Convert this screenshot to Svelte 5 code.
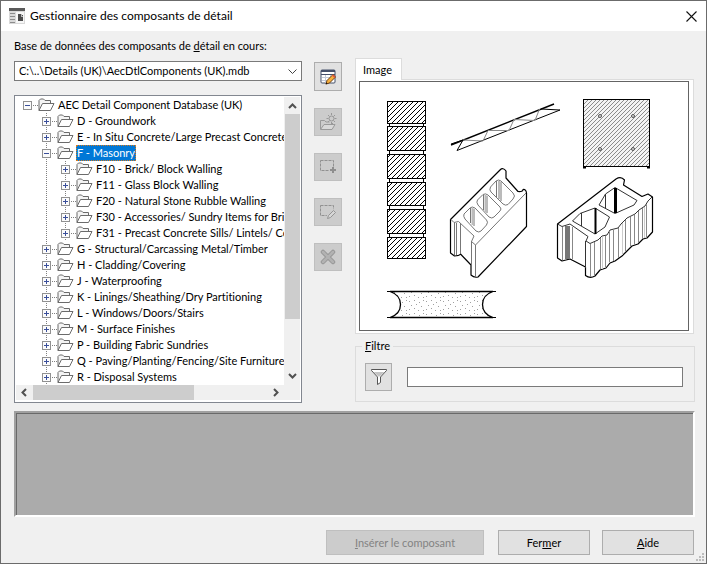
<script lang="ts">
  type Node = { label: string; open?: boolean; children?: Node[] }

  let tree = $state<Node[]>([
    {
      label: 'AEC Detail Component Database (UK)',
      open: true,
      children: [
        { label: 'D - Groundwork' },
        { label: 'E - In Situ Concrete/Large Precast Concrete' },
        {
          label: 'F - Masonry',
          open: true,
          children: [
            { label: 'F10 - Brick/ Block Walling' },
            { label: 'F11 - Glass Block Walling' },
            { label: 'F20 - Natural Stone Rubble Walling' },
            { label: 'F30 - Accessories/ Sundry Items for Bric' },
            { label: 'F31 - Precast Concrete Sills/ Lintels/ Co' },
          ],
        },
        { label: 'G - Structural/Carcassing Metal/Timber' },
        { label: 'H - Cladding/Covering' },
        { label: 'J - Waterproofing' },
        { label: 'K - Linings/Sheathing/Dry Partitioning' },
        { label: 'L - Windows/Doors/Stairs' },
        { label: 'M - Surface Finishes' },
        { label: 'P - Building Fabric Sundries' },
        { label: 'Q - Paving/Planting/Fencing/Site Furniture' },
        { label: 'R - Disposal Systems' },
      ],
    },
  ])

  let selected = $state('F - Masonry')
  let filter = $state('')

  // [top, height] of each brick in the wall section
  const bricks = [
    [101, 22],
    [126, 24],
    [154, 24],
    [182, 23],
    [209, 24],
    [237, 21],
  ]
</script>

{#snippet branch(nodes: Node[], depth: number)}
  <ul class:nested={depth > 0}>
    {#each nodes as node (node.label)}
      <li class:joined={depth > 0}>
        <div class="row">
          <button
            class="toggle"
            aria-label={node.open ? 'Réduire' : 'Développer'}
            onclick={() => (node.open = !node.open)}
          >
            <svg width="9" height="9" viewBox="0 0 9 9" shape-rendering="crispEdges">
              <rect x="0.5" y="0.5" width="8" height="8" fill="#fbfbfb" stroke="#919191" />
              <path d={node.open ? 'M2 4.5h5' : 'M2 4.5h5M4.5 2v5'} stroke="#3a4f9a" />
            </svg>
          </button>
          <span class="dots"></span>
          <svg class="folder" width="17" height="14" viewBox="0 0 17 14">
            <path
              d="M1 12.5V2.5L2.5 1h3L7 2.5h5.5v2.5"
              fill="#f4f4f4"
              stroke="#6b6b6b"
            />
            <path d="M1 12.5L4.5 5.5H16L12.5 12.5Z" fill="#fff" stroke="#6b6b6b" />
          </svg>
          <button
            class="label"
            class:selected={selected === node.label}
            onclick={() => (selected = node.label)}>{node.label}</button
          >
        </div>
        {#if node.open && node.children}
          {@render branch(node.children, depth + 1)}
        {/if}
      </li>
    {/each}
  </ul>
{/snippet}

<div class="window">
  <header>
    <svg width="16" height="16" viewBox="0 0 16 16" shape-rendering="crispEdges">
      <rect x="0" y="0" width="16" height="16" fill="#d9d9d9" />
      <rect x="0" y="0" width="16" height="3" fill="#5a5a5a" />
      <path d="M1 5.5h5M1 8.5h5M1 11.5h5M1 14.5h5" stroke="#8c8c8c" />
      <rect x="7" y="4" width="8" height="11" fill="#f6f6f6" />
      <path d="M9 6h3l2 2v5H9Z" fill="#4c4c4c" />
      <path d="M12 6v2h2" fill="none" stroke="#bbb" />
    </svg>
    <h1>Gestionnaire des composants de détail</h1>
    <button class="close" aria-label="Fermer la fenêtre">
      <svg width="11" height="11" viewBox="0 0 11 11">
        <path d="M0.5 0.5l10 10M10.5 0.5l-10 10" stroke="#111" stroke-width="1.1" />
      </svg>
    </button>
  </header>

  <main>
    <div class="columns">
      <section class="source">
        <label for="db">Base de données des composants de <u>d</u>étail en cours:</label>
        <div class="combo">
          <select id="db">
            <option>C:\..\Details (UK)\AecDtlComponents (UK).mdb</option>
          </select>
          <svg width="9" height="5" viewBox="0 0 9 5">
            <path d="M0.5 0.5l4 4 4-4" fill="none" stroke="#444" />
          </svg>
        </div>

        <div class="tree">
          <div class="rows">{@render branch(tree, 0)}</div>
          <div class="vbar">
            <svg width="9" height="6" viewBox="0 0 9 6">
              <path d="M1 5l3.5-3.5L8 5" fill="none" stroke="#505050" stroke-width="2" />
            </svg>
            <span></span>
            <svg width="9" height="6" viewBox="0 0 9 6">
              <path d="M1 1l3.5 3.5L8 1" fill="none" stroke="#505050" stroke-width="2" />
            </svg>
          </div>
          <div class="hbar">
            <svg width="6" height="9" viewBox="0 0 6 9">
              <path d="M5 1L1.5 4.5 5 8" fill="none" stroke="#505050" stroke-width="2" />
            </svg>
            <span></span>
            <svg width="6" height="9" viewBox="0 0 6 9">
              <path d="M1 1l3.5 3.5L1 8" fill="none" stroke="#505050" stroke-width="2" />
            </svg>
          </div>
        </div>
      </section>

      <div class="tools">
        <button aria-label="Modifier la base de données">
          <svg width="16" height="16" viewBox="0 0 16 16">
            <rect x="1" y="1" width="14" height="13" rx="1" fill="#fff" stroke="#45506a" />
            <path d="M1 2h14" stroke="#45506a" stroke-width="2" />
            <path d="M1 5.5h14" stroke="#45506a" />
            <path d="M2 8.5h12M2 11.5h9M5.5 6v8M10.5 6v4" stroke="#c3cad8" />
            <path d="M6 15l1-3.5 6-6 2.5 2.5-6 6Z" fill="#f7b03c" stroke="#6b3f12" />
            <path d="M12.5 6l2.5 2.5" stroke="#e5533d" stroke-width="1.5" />
            <path d="M5.5 15.5l1-2 1 1Z" fill="#111" />
          </svg>
        </button>
        <button disabled aria-label="Nouveau groupe">
          <svg width="18" height="18" viewBox="0 0 18 18">
            <g fill="none" stroke="#999">
              <path d="M1.5 16V7.5h4L7 9h3.5M13.5 10v1.5" />
              <path d="M1.5 16.5L5 11.5h11L13 16.5Z" fill="#d8d8d8" />
              <circle cx="12.5" cy="5.5" r="2.5" />
              <path d="M12.5 0v2M12.5 9v2M7.5 5.5h2M15.5 5.5h2M9 2l1.5 1.5M16 2l-1.5 1.5M9 9l1.5-1.5M16 9l-1.5-1.5" />
            </g>
          </svg>
        </button>
        <button disabled aria-label="Ajouter un composant">
          <svg width="18" height="16" viewBox="0 0 18 16">
            <rect x="1.5" y="1.5" width="13" height="10" fill="none" stroke="#919191" stroke-dasharray="3 1" />
            <rect x="10" y="8" width="8" height="8" fill="#ccc" />
            <path d="M14 8v6M11 11h6" stroke="#8e8e8e" stroke-width="2" />
          </svg>
        </button>
        <button disabled aria-label="Modifier le composant">
          <svg width="18" height="16" viewBox="0 0 18 16">
            <rect x="1.5" y="1.5" width="13" height="10" fill="none" stroke="#919191" stroke-dasharray="3 1" />
            <path d="M8 15l1-4 5-5 3 3-5 5Z" fill="#ccc" stroke="#ccc" stroke-width="2" />
            <path d="M8.5 14.5l1-3 5-5 2 2-5 5Z" fill="#d6d6d6" stroke="#949494" />
          </svg>
        </button>
        <button disabled aria-label="Supprimer">
          <svg width="16" height="16" viewBox="0 0 16 16">
            <path d="M3 3l10 10M13 3L3 13" stroke="#979797" stroke-width="4.5" stroke-linecap="round" />
            <path d="M3 3l10 10M13 3L3 13" stroke="#b2b2b2" stroke-width="2.5" stroke-linecap="round" />
          </svg>
        </button>
      </div>

      <section class="preview">
        <div role="tablist"><button class="tab" role="tab" aria-selected="true">Image</button></div>
        <div class="page">
          <svg class="drawing" viewBox="360 82 328 248" role="img" aria-label="Maçonnerie">
            <defs>
              <pattern id="brick" width="5" height="5" patternUnits="userSpaceOnUse">
                <path
                  d="M0 4h1v1H0ZM1 3h1v1H1ZM2 2h1v1H2ZM3 1h1v1H3ZM4 0h1v1H4Z"
                  fill="#000"
                  shape-rendering="crispEdges"
                />
              </pattern>
              <pattern id="slab" width="4" height="4" patternUnits="userSpaceOnUse">
                <rect width="4" height="4" fill="#f4f4f4" />
                <path
                  d="M0 3h1v1H0ZM1 2h1v1H1ZM2 1h1v1H2ZM3 0h1v1H3Z"
                  fill="#8c8c8c"
                  shape-rendering="crispEdges"
                />
              </pattern>
              <pattern id="sand" width="17" height="13" patternUnits="userSpaceOnUse">
                <path
                  d="M1 2.5h1M6 1.5h1M11 3.5h1M15 1.5h1M3 6.5h1M8 5.5h1M13 7.5h1M1 10.5h1M6 9.5h1M10 11.5h1M15 11.5h1"
                  stroke="#a0a0a0"
                />
              </pattern>
            </defs>

            <g stroke="#000" shape-rendering="crispEdges" fill="none">
              <path d="M389.5 102V257M423.5 102V257" />
              {#each bricks as [top, height] (top)}
                <rect x="387.5" y={top + 0.5} width="38" {height} fill="#fff" stroke="none" />
                <rect x="387.5" y={top + 0.5} width="38" {height} fill="url(#brick)" />
              {/each}
            </g>

            <g fill="none" stroke="#000">
              <path d="M451 145L554 104" stroke-width="1.5" />
              <path d="M451 144L463 140L457 150.5L560 110L541 109" />
              <path
                d="M463 140L483 141L488 130.5L509 130.5L514 119.5L535 120.5L539.5 109"
                stroke="#888"
              />
            </g>

            <g fill="none" stroke="#000">
              <rect x="583.5" y="99.5" width="66" height="67" fill="url(#slab)" />
              <path d="M583 167.5h3M647 167.5h3" stroke-width="2" />
              {#each [116, 149] as cy (cy)}
                <circle cx="600" {cy} r="1.5" fill="#ddd" stroke="#555" />
                <circle cx="633" {cy} r="1.5" fill="#ddd" stroke="#555" />
              {/each}
            </g>

            <!-- hollow block with three cells -->
            <g fill="none" stroke-linejoin="round">
              <path
                d="M450.5 219.5L500 170Q503 167 506 171V178L518 191.5Q523 192 523 189.5Q526 189 526.5 193V226.5L478 277Q474 278 471 275V265L460.5 254Q459 256 454.5 256L450.5 253Z"
                fill="#fff"
                stroke="#000"
                stroke-width="1.2"
              />
              <g stroke="#777">
                <path d="M451 219.5L454 222.5L458.5 221.5L474 236L471.5 241.5L475.5 245L526 193" />
                <path d="M471.5 241V265M475.5 245V277M454.5 223V255M456.5 223V255M460.5 223V253" />
                <path d="M490.5 187L496 181Q498.5 179 501 181L513 193Q516 196 513 199L508 204.5Q505.5 206 503 204L491 192Q489 190 490.5 187Z" />
                <path d="M477.5 200L483 194.5Q485.5 193 488 195L500 207Q502 209 500 211L494 217Q492 219 489 217L478 205Q476 202 477.5 200Z" />
                <path d="M464 214L470 208Q472 206 475 208L486.5 220Q488.5 222 486.5 225L481 231Q479 233 476 231L465 219Q463 216 464 214Z" />
                <path d="M496.5 181V197M501 182V201M483.5 195V210M487 196V213M470.5 208V223M474 209V226" />
              </g>
              <path d="M499 181V199M485.5 195V212M472.5 208V225" stroke="#bbb" stroke-width="2" />
            </g>

            <!-- two-cell block with split face -->
            <g fill="none" stroke-linejoin="round">
              <path
                d="M557.5 224L616 179Q621 176 624.5 180L623.5 185L642 196.5L648 194L652.5 197V232L647 238L643 239L638 244L632 246L626 252L622 256L615 261L610 263L606 268L600 270L595 276Q590 279 585.5 275.5V267L570 259L562 261L557.5 258Z"
                fill="#fff"
                stroke="#000"
                stroke-width="1.2"
              />
              <g stroke="#333">
                <path d="M557.5 224L562 226.5L570 224L588 236.5L586 241L590 243.5L598 240L602 236L607 235L610 230L618 228L621 224L627 218L635 214L639 210L645 206L648 201L652 197" />
                <path d="M615 187.5L637 200.5L634 205L615 213.5L599 205L605.5 194Z" />
                <path d="M595 208L609.5 217L605 227L595 234L572.5 221L580 213.5Z" />
                <path d="M605.5 194V208M581.5 213V226M585.5 241V268" />
              </g>
              <g stroke="#888">
                <path d="M562.5 227V260M572.5 227V259M590.5 244V277M594.5 242V275M600.5 238V269M605.5 236V267M609.5 231V262M613.5 229V261M618.5 228V258M625.5 220V251M630.5 217V246M634.5 215V245M638.5 211V243M642.5 208V239M646.5 204V237" />
                <path d="M602.5 237V269M622.5 223V255M644.5 207V238" stroke="#ccc" />
              </g>
              <path d="M567.5 226V259" stroke="#777" stroke-width="5" />
              <path d="M615.5 188V213" stroke="#000" stroke-width="3" />
              <path d="M595.5 208V234" stroke="#000" stroke-width="2" />
            </g>

            <g>
              <path
                d="M390 291.5Q400.5 295 400.5 304.5Q400.5 314 390 317.5H493Q482.5 314 482.5 304.5Q482.5 295 493 291.5Z"
                fill="url(#sand)"
                stroke="#000"
                stroke-width="1.3"
              />
              <path d="M387 291.5H496M387 317.5H496" stroke="#000" shape-rendering="crispEdges" />
            </g>
          </svg>
        </div>

        <fieldset>
          <legend><u>F</u>iltre</legend>
          <button class="funnel" aria-label="Appliquer le filtre">
            <svg width="18" height="18" viewBox="0 0 18 18">
              <path d="M1.5 1.5h15v1L10.5 9v5.5L7.5 16.5V9L1.5 2.5Z" fill="#fff" stroke="#555" />
              <path d="M3.5 4h11L9.5 8.5h-1Z" fill="#c4c4c4" />
            </svg>
          </button>
          <input type="text" aria-label="Filtre" bind:value={filter} />
        </fieldset>
      </section>
    </div>

    <div class="details"></div>

    <footer>
      <button class="wide" disabled><u>I</u>nsérer le composant</button>
      <button>Fer<u>m</u>er</button>
      <button><u>A</u>ide</button>
    </footer>
  </main>

  <svg class="grip" width="8" height="8" viewBox="0 0 8 8" fill="#bcbcbc">
    <path d="M6 0h2v2H6ZM6 3h2v2H6ZM6 6h2v2H6ZM3 3h2v2H3ZM3 6h2v2H3ZM0 6h2v2H0Z" />
  </svg>
</div>

<style>
  :global(body) {
    margin: 0;
  }

  .window,
  .window :global(*) {
    box-sizing: border-box;
  }

  .window {
    position: relative;
    display: flex;
    flex-direction: column;
    min-height: 100vh;
    border: 1px solid #6b6b6b;
    background: #f0f0f0;
    color: #000;
    font: 11px/16px Lato, 'Liberation Sans', Arial, sans-serif;
    font-variant-ligatures: none;
  }

  button,
  select,
  input {
    margin: 0;
    padding: 0;
    font: inherit;
    font-variant-ligatures: none;
    color: inherit;
    border-radius: 0;
  }

  svg {
    display: block;
    flex: none;
  }

  header {
    display: flex;
    align-items: center;
    gap: 5px;
    height: 30px;
    padding: 0 9px 0 8px;
    background: #fff;
  }

  h1 {
    flex: 1;
    margin: 0;
    font-size: 12px;
    font-weight: 400;
  }

  .close {
    border: 0;
    background: none;
  }

  main {
    flex: 1;
    display: flex;
    flex-direction: column;
    padding: 7px 11px 8px 13px;
  }

  .columns {
    display: grid;
    grid-template-columns: minmax(0, 288fr) 28px minmax(0, 341fr);
    column-gap: 12px;
  }

  .source {
    display: flex;
    flex-direction: column;
  }

  .combo {
    display: grid;
    align-items: center;
    margin: 7px 0 14px;
  }
  .combo select {
    grid-area: 1 / 1;
    width: 100%;
    height: 20px;
    padding: 0 24px 0 4px;
    border: 1px solid #7a7a7a;
    background: #fff;
    appearance: none;
  }
  .combo svg {
    grid-area: 1 / 1;
    justify-self: end;
    margin-right: 5px;
    pointer-events: none;
  }

  .tree {
    flex: 1;
    display: grid;
    grid-template: minmax(0, 1fr) 15px / minmax(0, 1fr) 16px;
    padding: 1px 1px 2px;
    border: 1px solid #828790;
    background: #fff;
  }

  .rows {
    overflow: hidden;
    padding-left: 7px;
  }

  ul {
    margin: 0;
    padding: 0;
    list-style: none;
  }
  ul.nested {
    padding-left: 19px;
  }

  /* The dotted guide runs down the middle of the toggles of one level. */
  li.joined {
    background: repeating-linear-gradient(#808080 0 1px, transparent 1px 2px) 4px 0 / 1px 100%
      no-repeat;
  }

  .row {
    display: flex;
    align-items: center;
    height: 16px;
    white-space: nowrap;
  }

  .toggle {
    border: 0;
    background: none;
  }

  .dots {
    flex: none;
    width: 6px;
    height: 1px;
    background: repeating-linear-gradient(90deg, transparent 0 1px, #808080 1px 2px);
  }

  .label {
    height: 16px;
    margin-left: 2px;
    padding: 0 1px;
    border: 0;
    background: none;
  }
  .label.selected {
    background: #0078d7;
    color: #fff;
    outline: 1px dotted #d97a1c;
    outline-offset: -1px;
  }

  .vbar,
  .hbar {
    display: flex;
    align-items: center;
    justify-content: space-between;
    background: #f0f0f0;
  }
  .vbar {
    flex-direction: column;
    padding: 6px 0;
  }
  .vbar span {
    width: 15px;
    flex: 0 1 205px;
    margin: 5px 0 auto;
    background: #cdcdcd;
  }
  .hbar {
    grid-column: 1 / -1;
    padding: 0 21px 0 5px;
  }
  .hbar span {
    flex: 0 1 161px;
    height: 15px;
    margin: 0 auto 0 6px;
    background: #cdcdcd;
  }

  .tools {
    display: flex;
    flex-direction: column;
    gap: 17px;
    padding-top: 24px;
  }

  .tools button,
  .funnel,
  footer button {
    display: grid;
    place-items: center;
    border: 1px solid #adadad;
    background: #e1e1e1;
  }
  .tools button {
    height: 28px;
  }
  .tools button:first-child {
    height: 29px;
  }
  .tools button:disabled,
  footer button:disabled {
    border-color: #bfbfbf;
    background: #ccc;
    color: #838383;
  }

  .preview {
    margin-left: 1px;
    padding-top: 20px;
  }

  .tab {
    display: block;
    position: relative;
    height: 22px;
    padding: 0 9px 0 7px;
    border: 1px solid #dcdcdc;
    border-bottom: 0;
    background: #fff;
    margin-bottom: -1px;
  }

  .page {
    margin-right: 1px;
    padding: 1px 4px 2px 3px;
    border: 1px solid #dcdcdc;
    background: #fff;
  }

  .drawing {
    width: 100%;
    border: 1px solid #646464;
  }

  fieldset {
    display: flex;
    align-items: center;
    gap: 15px;
    min-width: 0;
    margin: 4px 0 0;
    padding: 9px 11px 10px 9px;
    border: 1px solid #dcdcdc;
  }
  legend {
    margin-left: -3px;
    padding: 0 3px;
  }

  .funnel {
    width: 27px;
    height: 28px;
  }

  fieldset input {
    flex: 1;
    min-width: 0;
    height: 20px;
    padding: 0 4px;
    border: 1px solid #7a7a7a;
    background: #fff;
  }

  .details {
    flex: 1;
    min-height: 100px;
    margin-top: 8px;
    border: 2px solid;
    border-color: #a0a0a0 #fff #fff #a0a0a0;
    background: #ababab;
    box-shadow: inset 1px 1px #696969;
  }

  footer {
    display: flex;
    justify-content: flex-end;
    gap: 12px;
    margin: 13px 1px 0 0;
  }
  footer button {
    display: block;
    width: 92px;
    height: 25px;
  }
  footer .wide {
    width: 158px;
    margin-right: 2px;
  }

  .grip {
    position: absolute;
    right: 2px;
    bottom: 2px;
  }
</style>
